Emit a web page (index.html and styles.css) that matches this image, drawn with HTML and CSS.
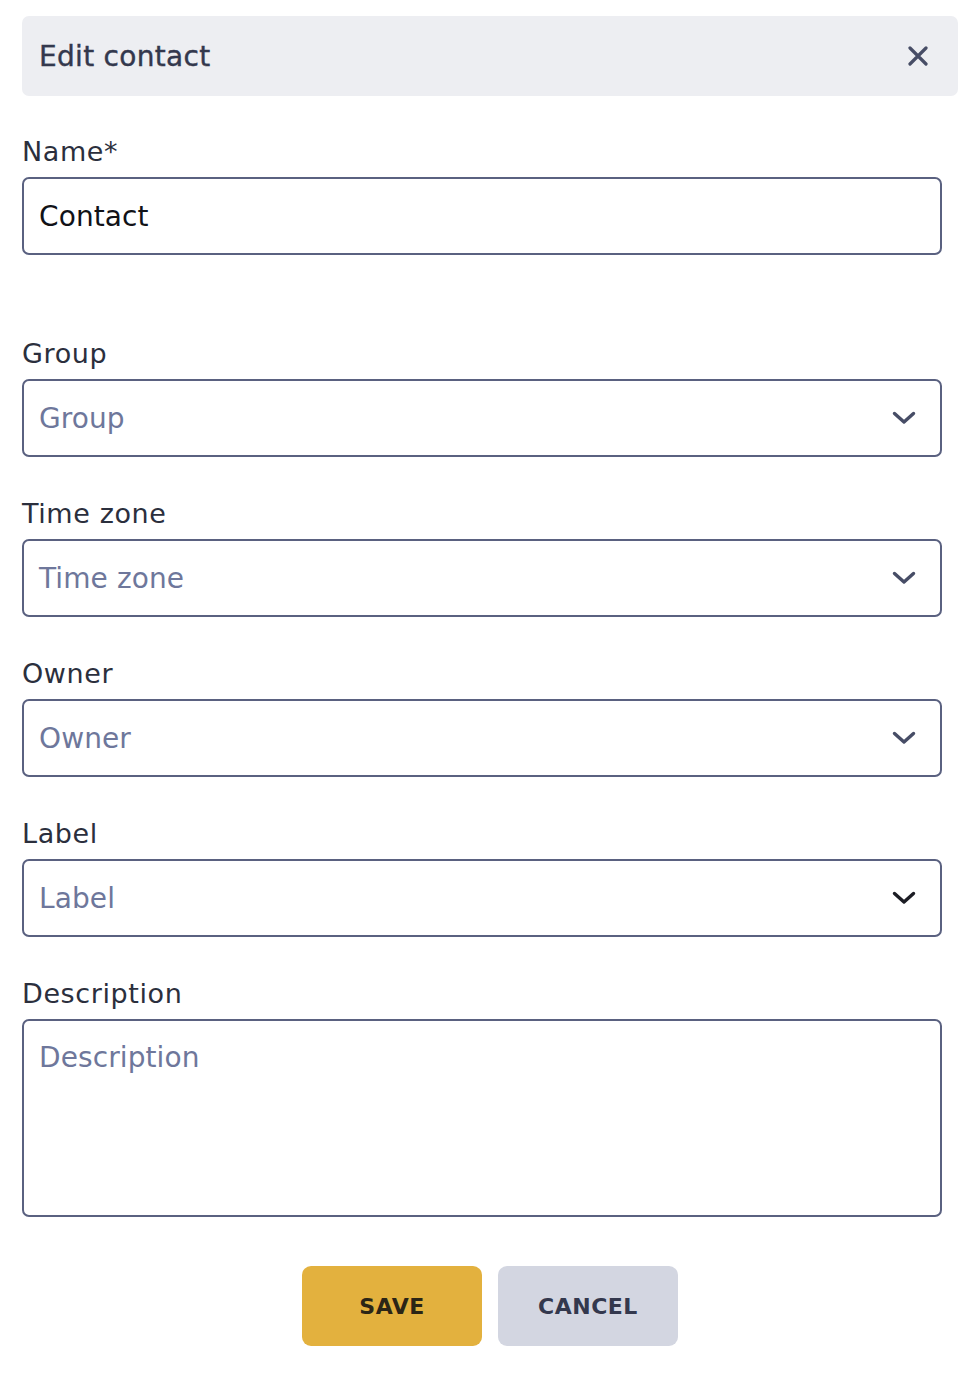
FILE: index.html
```html
<!DOCTYPE html>
<html lang="en">
<head>
<meta charset="utf-8">
<title>Edit contact</title>
<link rel="stylesheet" href="styles.css">
</head>
<body>
<div class="dialog">
  <div class="header">
    <h1 class="title">Edit contact</h1>
    <button class="close" aria-label="Close">
      <svg width="20" height="20" viewBox="0 0 20 20"><path d="M2 2 L18 18 M18 2 L2 18" stroke="#474d66" stroke-width="3.2" stroke-linecap="round" fill="none"/></svg>
    </button>
  </div>
  <form class="form">
    <div class="field field-name">
      <label class="label">Name*</label>
      <div class="input"><span class="value">Contact</span></div>
    </div>
    <div class="field">
      <label class="label">Group</label>
      <div class="input select"><span class="placeholder">Group</span>
        <svg class="chev" width="24" height="14" viewBox="0 0 24 14"><path d="M2.5 2.5 L12 11 L21.5 2.5" stroke="#474d66" stroke-width="3.4" stroke-linecap="round" stroke-linejoin="round" fill="none"/></svg>
      </div>
    </div>
    <div class="field">
      <label class="label">Time zone</label>
      <div class="input select"><span class="placeholder">Time zone</span>
        <svg class="chev" width="24" height="14" viewBox="0 0 24 14"><path d="M2.5 2.5 L12 11 L21.5 2.5" stroke="#474d66" stroke-width="3.4" stroke-linecap="round" stroke-linejoin="round" fill="none"/></svg>
      </div>
    </div>
    <div class="field">
      <label class="label">Owner</label>
      <div class="input select"><span class="placeholder">Owner</span>
        <svg class="chev" width="24" height="14" viewBox="0 0 24 14"><path d="M2.5 2.5 L12 11 L21.5 2.5" stroke="#474d66" stroke-width="3.4" stroke-linecap="round" stroke-linejoin="round" fill="none"/></svg>
      </div>
    </div>
    <div class="field">
      <label class="label">Label</label>
      <div class="input select"><span class="placeholder">Label</span>
        <svg class="chev" width="24" height="14" viewBox="0 0 24 14"><path d="M2.5 2.5 L12 11 L21.5 2.5" stroke="#1c1d24" stroke-width="3.4" stroke-linecap="round" stroke-linejoin="round" fill="none"/></svg>
      </div>
    </div>
    <div class="field">
      <label class="label">Description</label>
      <div class="input textarea"><span class="placeholder">Description</span></div>
    </div>
    <div class="actions">
      <button type="button" class="btn btn-save">SAVE</button>
      <button type="button" class="btn btn-cancel">CANCEL</button>
    </div>
  </form>
</div>
</body>
</html>
```

FILE: styles.css
```css
* { box-sizing: border-box; }
html, body { margin: 0; padding: 0; background: #ffffff; }
body {
  font-family: "DejaVu Sans", "Open Sans", sans-serif;
  color: #2b2f3d;
}
.dialog {
  width: 936px;
  margin: 16px 0 0 22px;
}
.header {
  height: 80px;
  background: #edeef2;
  border-radius: 7px;
  display: flex;
  align-items: center;
  justify-content: space-between;
  padding: 0 30px 0 17px;
}
.title {
  margin: 0;
  font-size: 28px;
  font-weight: 400;
  color: #33384d;
  letter-spacing: 0.3px;
  -webkit-text-stroke: 0.4px #33384d;
}
.close {
  border: 0;
  background: transparent;
  padding: 0;
  width: 20px;
  height: 20px;
  display: flex;
}
.form {
  width: 920px;
  padding-top: 40px;
  display: flex;
  flex-direction: column;
}
.field {
  display: flex;
  flex-direction: column;
  margin-bottom: 41px;
}
.field-name { margin-bottom: 83px; }
.label {
  font-size: 27px;
  line-height: 32px;
  margin-bottom: 9px;
  color: #2b2f3d;
  letter-spacing: 0.6px;
}
.input {
  height: 78px;
  border: 2px solid #5a6180;
  border-radius: 7px;
  display: flex;
  align-items: center;
  padding: 0 24px 0 15px;
  font-size: 28px;
  letter-spacing: 0.1px;
}
.value { color: #111217; }
.placeholder { color: #6e779b; }
.select { justify-content: space-between; }
.chev { display: block; }
.textarea {
  height: 198px;
  align-items: flex-start;
  padding-top: 20px;
}
.actions {
  width: 936px;
  margin-top: 8px;
  display: flex;
  justify-content: center;
  gap: 16px;
}
.btn {
  width: 180px;
  height: 80px;
  border: 0;
  border-radius: 9px;
  font-family: inherit;
  font-size: 22px;
  font-weight: 700;
  letter-spacing: 0.5px;
}
.btn-save { background: #e3b13e; color: #2b2516; }
.btn-cancel { background: #d3d6e1; color: #33384d; }
```
